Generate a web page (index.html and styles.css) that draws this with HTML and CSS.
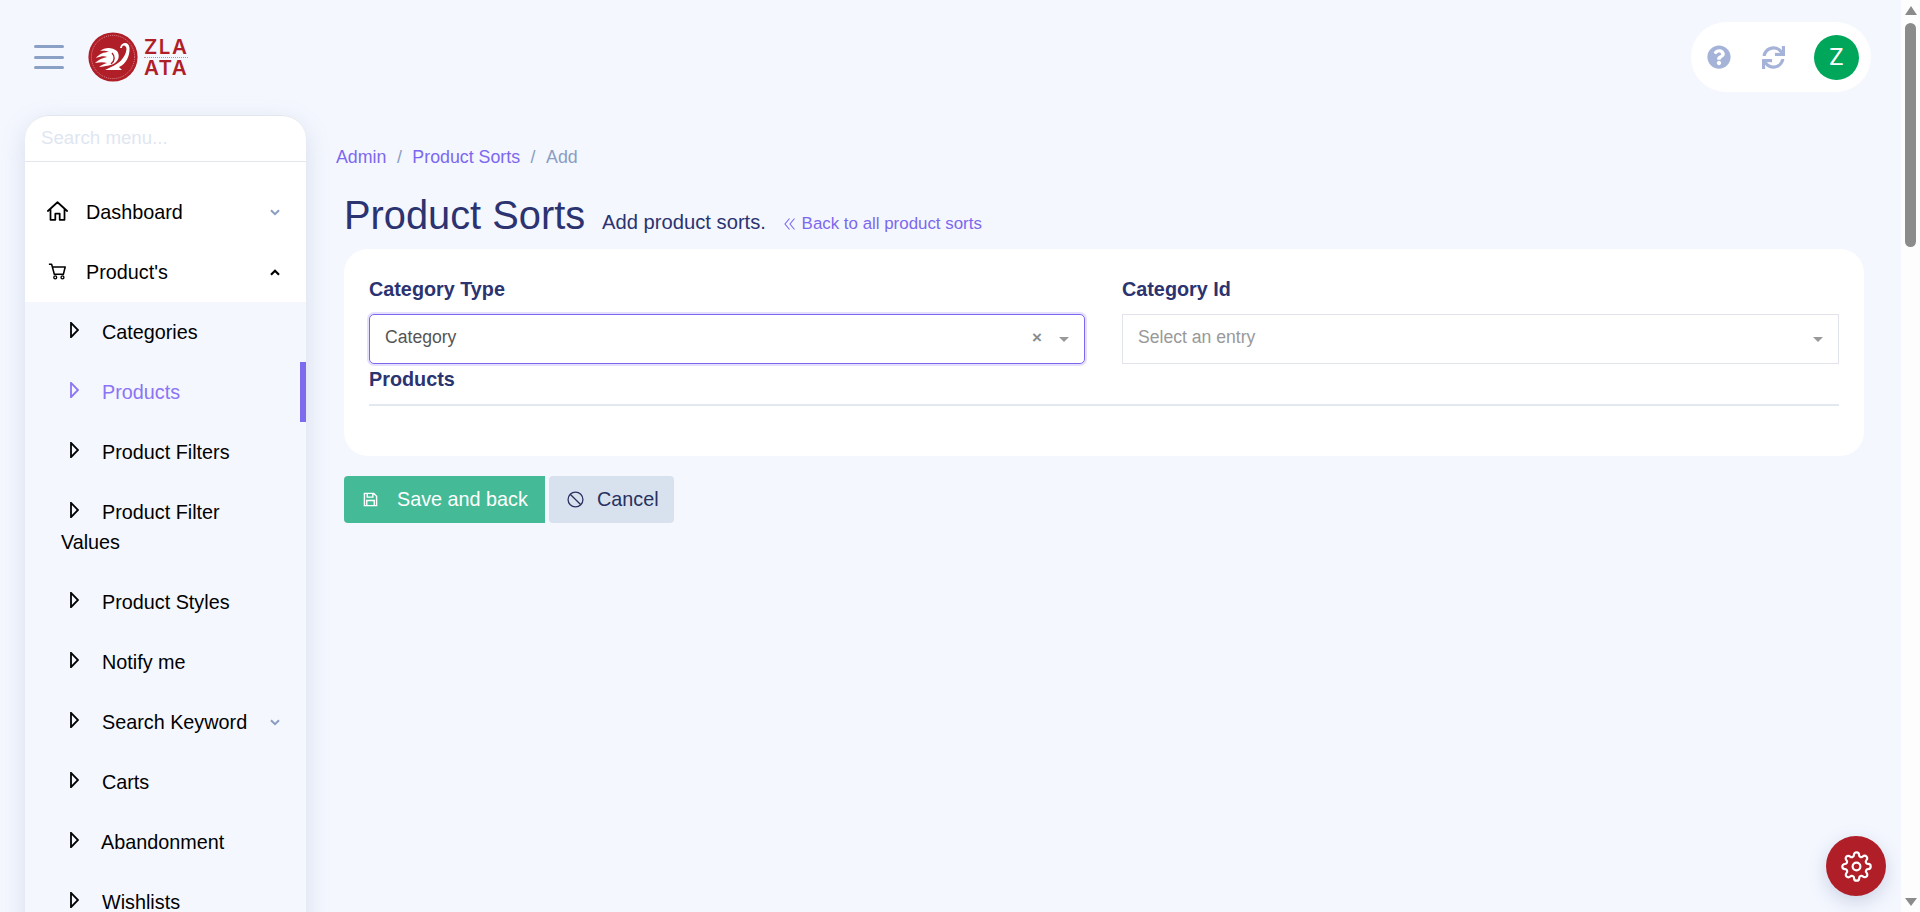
FILE: index.html
```html
<!DOCTYPE html>
<html lang="en">
<head>
<meta charset="utf-8">
<title>Product Sorts</title>
<link rel="stylesheet" href="styles.css">
</head>
<body>
<div class="app">
  <div class="page">
    <header class="topbar">
      <button class="burger" aria-label="Menu"><span></span><span></span><span></span></button>
      <div class="logo">
        <svg class="logo-mark" viewBox="0 0 50 50" width="50" height="50">
          <circle cx="25" cy="25" r="24.6" fill="#b01e28"/>
          <circle cx="25" cy="25" r="21.6" fill="none" stroke="#f3c9cc" stroke-width=".6" stroke-dasharray="1 1"/>
          <path d="M32 16C33 10 41 9 41.500 16C42 24 38 32 31 35L34 38H17L23 35C29 33 38 26 38.500 17C38.500 13 34 12 34 16Z" fill="#fff"/>
          <path d="M29 19C24 15 17 15 12 19C16 18.500 19 19 21 20C16 20 11 22 8 26C13 24 17 24 19 25C14 26 10 28 7 31C12 30 16 30 19 31C16 32 13 33 11 35C17 34 23 34 27 31C31 28 32 23 29 19Z" fill="#fff"/>
          <path d="M24 21C27 24 27 29 23 32" fill="none" stroke="#b01e28" stroke-width="1.400"/>
        </svg>
        <div class="logo-text">
          <span class="logo-word">ZLA</span>
          <span class="logo-word logo-word-low">ATA</span>
        </div>
      </div>
      <div class="actions">
        <svg class="action-icon" viewBox="0 0 512 512" width="24" height="24"><path d="M504 256c0 136.997-111.043 248-248 248S8 392.997 8 256C8 119.083 119.043 8 256 8s248 111.083 248 248zM262.655 90c-54.497 0-89.255 22.957-116.549 63.758-3.536 5.286-2.353 12.415 2.715 16.258l34.699 26.31c5.205 3.947 12.621 3.008 16.665-2.122 17.864-22.658 30.113-35.797 57.303-35.797 20.429 0 45.698 13.148 45.698 32.958 0 14.976-12.363 22.667-32.534 33.976C247.128 238.528 216 254.941 216 296v4c0 6.627 5.373 12 12 12h56c6.627 0 12-5.373 12-12v-1.333c0-28.462 83.186-29.647 83.186-106.667 0-58.002-60.165-102-116.531-102zM256 338c-25.365 0-46 20.635-46 46 0 25.364 20.635 46 46 46s46-20.636 46-46c0-25.365-20.635-46-46-46z"/></svg>
        <svg class="action-icon" viewBox="0 0 512 512" width="23" height="23"><path d="M440.65 12.57l4 82.77A247.16 247.16 0 0 0 255.83 8C134.73 8 33.91 94.92 12.29 209.82A12 12 0 0 0 24.09 224h49.05a12 12 0 0 0 11.67-9.26 175.91 175.91 0 0 1 317-56.94l-101.46-4.86a12 12 0 0 0-12.57 12v47.41a12 12 0 0 0 12 12H500a12 12 0 0 0 12-12V12a12 12 0 0 0-12-12h-47.37a12 12 0 0 0-11.98 12.57zM255.83 432a175.61 175.61 0 0 1-146-77.8l101.8 4.87a12 12 0 0 0 12.57-12v-47.4a12 12 0 0 0-12-12H12a12 12 0 0 0-12 12V500a12 12 0 0 0 12 12h47.35a12 12 0 0 0 12-12.6l-4.15-82.57A247.17 247.17 0 0 0 255.83 504c121.11 0 221.93-86.92 243.55-201.82a12 12 0 0 0-11.8-14.18h-49.05a12 12 0 0 0-11.67 9.26A175.86 175.86 0 0 1 255.83 432z"/></svg>
        <div class="avatar">Z</div>
      </div>
    </header>

    <div class="layout">
      <aside class="sidebar">
        <div class="search"><input class="search-input" type="text" placeholder="Search menu..."></div>
        <nav class="menu">
          <a class="item">
            <svg class="item-icon" viewBox="0 0 24 22" width="21" height="20"><path d="M1 11 12 1l11 10M4 9v12h5.5v-7h5v7H20V9" fill="none" stroke="#000" stroke-width="2" stroke-linejoin="round" stroke-linecap="round"/></svg>
            <span class="item-label">Dashboard</span>
            <svg class="caret" viewBox="0 0 10 7" width="10" height="7"><path d="M1 1.200 5 5.200 9 1.200" fill="none" stroke="#8a9dc0" stroke-width="2"/></svg>
          </a>
          <a class="item">
            <svg class="item-icon item-icon-cart" viewBox="0 0 21 18" width="19" height="17"><path d="M1 1h3l3 11h10l2-8H5" fill="none" stroke="#000" stroke-width="1.700" stroke-linejoin="round"/><circle cx="8" cy="15.500" r="1.600" fill="none" stroke="#000" stroke-width="1.500"/><circle cx="16" cy="15.500" r="1.600" fill="none" stroke="#000" stroke-width="1.500"/></svg>
            <span class="item-label">Product's</span>
            <svg class="caret" viewBox="0 0 10 7" width="10" height="7"><path d="M1 5.800 5 1.800 9 5.800" fill="none" stroke="#000" stroke-width="2.200"/></svg>
          </a>
          <div class="sub">
            <a class="sub-item"><svg class="tri" viewBox="0 0 9 16" width="9" height="16"><path d="M1 .8 8 8 1 15.200Z"/></svg>Categories</a>
            <a class="sub-item active"><svg class="tri" viewBox="0 0 9 16" width="9" height="16"><path d="M1 .8 8 8 1 15.200Z"/></svg>Products</a>
            <a class="sub-item"><svg class="tri" viewBox="0 0 9 16" width="9" height="16"><path d="M1 .8 8 8 1 15.200Z"/></svg>Product Filters</a>
            <a class="sub-item"><svg class="tri" viewBox="0 0 9 16" width="9" height="16"><path d="M1 .8 8 8 1 15.200Z"/></svg>Product Filter Values</a>
            <a class="sub-item"><svg class="tri" viewBox="0 0 9 16" width="9" height="16"><path d="M1 .8 8 8 1 15.200Z"/></svg>Product Styles</a>
            <a class="sub-item"><svg class="tri" viewBox="0 0 9 16" width="9" height="16"><path d="M1 .8 8 8 1 15.200Z"/></svg>Notify me</a>
            <a class="sub-item has-caret"><span><svg class="tri" viewBox="0 0 9 16" width="9" height="16"><path d="M1 .8 8 8 1 15.200Z"/></svg>Search Keyword</span><svg class="caret" viewBox="0 0 10 7" width="10" height="7"><path d="M1 1.200 5 5.200 9 1.200" fill="none" stroke="#8a9dc0" stroke-width="2"/></svg></a>
            <a class="sub-item"><svg class="tri" viewBox="0 0 9 16" width="9" height="16"><path d="M1 .8 8 8 1 15.200Z"/></svg>Carts</a>
            <a class="sub-item tight"><svg class="tri" viewBox="0 0 9 16" width="9" height="16"><path d="M1 .8 8 8 1 15.200Z"/></svg>Abandonment</a>
            <a class="sub-item"><svg class="tri" viewBox="0 0 9 16" width="9" height="16"><path d="M1 .8 8 8 1 15.200Z"/></svg>Wishlists</a>
          </div>
        </nav>
      </aside>

      <main class="main">
        <ol class="crumbs">
          <li class="crumb-link">Admin</li>
          <li class="crumb-sep">/</li>
          <li class="crumb-link">Product Sorts</li>
          <li class="crumb-sep">/</li>
          <li class="crumb-current">Add</li>
        </ol>
        <div class="heading">
          <h1 class="title">Product Sorts</h1>
          <span class="subtitle">Add product sorts.</span>
          <a class="back">
            <svg class="back-icon" viewBox="0 0 12 14" width="12" height="14"><path d="M5.500 1.500 1 7l4.500 5.500M10.500 1.500 6 7l4.500 5.500" fill="none" stroke="#7c68ee" stroke-width="1.100"/></svg>
            Back to all product sorts
          </a>
        </div>
        <section class="card">
          <div class="fields">
            <div class="field">
              <label class="label">Category Type</label>
              <div class="select focused">
                <span class="select-value">Category</span>
                <span class="select-clear">×</span>
                <span class="select-arrow"></span>
              </div>
            </div>
            <div class="field">
              <label class="label">Category Id</label>
              <div class="select">
                <span class="select-placeholder">Select an entry</span>
                <span class="select-arrow"></span>
              </div>
            </div>
          </div>
          <div class="label section-label">Products</div>
          <hr class="rule">
        </section>
        <div class="buttons">
          <button class="btn btn-save">
            <svg viewBox="0 0 16 16" width="15" height="15"><path d="M1.500 1.500h10l3 3v10h-13zM4.500 1.500v4h6v-4M4 14.500v-5.500h8v5.500" fill="none" stroke="#fff" stroke-width="1.500"/></svg>
            Save and back
          </button>
          <button class="btn btn-cancel">
            <svg viewBox="0 0 16 16" width="17" height="17"><circle cx="8" cy="8" r="7" fill="none" stroke="#27305f" stroke-width="1.200"/><path d="M3 3l10 10" stroke="#27305f" stroke-width="1.200"/></svg>
            Cancel
          </button>
        </div>
      </main>
    </div>

    <button class="fab" aria-label="Settings">
      <svg viewBox="0 0 24 24" width="31" height="31" fill="none" stroke="#fff" stroke-width="1.700"><circle cx="12" cy="12" r="3"/><path d="M19.400 15a1.650 1.650 0 0 0 .33 1.820l.06.06a2 2 0 0 1 0 2.830 2 2 0 0 1-2.830 0l-.06-.06a1.650 1.650 0 0 0-1.820-.33 1.650 1.650 0 0 0-1 1.510V21a2 2 0 0 1-2 2 2 2 0 0 1-2-2v-.09A1.650 1.650 0 0 0 9 19.400a1.650 1.650 0 0 0-1.820.33l-.06.06a2 2 0 0 1-2.830 0 2 2 0 0 1 0-2.830l.06-.06a1.650 1.650 0 0 0 .33-1.820 1.650 1.650 0 0 0-1.510-1H3a2 2 0 0 1-2-2 2 2 0 0 1 2-2h.09A1.650 1.650 0 0 0 4.600 9a1.650 1.650 0 0 0-.33-1.820l-.06-.06a2 2 0 0 1 0-2.830 2 2 0 0 1 2.830 0l.06.06a1.650 1.650 0 0 0 1.820.33H9a1.650 1.650 0 0 0 1-1.510V3a2 2 0 0 1 2-2 2 2 0 0 1 2 2v.09a1.650 1.650 0 0 0 1 1.510 1.650 1.650 0 0 0 1.820-.33l.06-.06a2 2 0 0 1 2.830 0 2 2 0 0 1 0 2.830l-.06.06a1.650 1.650 0 0 0-.33 1.820V9a1.650 1.650 0 0 0 1.510 1H21a2 2 0 0 1 2 2 2 2 0 0 1-2 2h-.09a1.650 1.650 0 0 0-1.510 1z"/></svg>
    </button>
  </div>

  <div class="scrollbar">
    <span class="sb-up"></span>
    <span class="sb-thumb"></span>
    <span class="sb-down"></span>
  </div>
</div>
</body>
</html>
```
FILE: styles.css
```css
* { box-sizing: border-box; }
html, body { margin: 0; height: 100%; overflow: hidden; }
body { font-family: "Liberation Sans", Arial, sans-serif; color: #000; background: #f4f7fe; }

.app { display: flex; width: 1920px; height: 912px; }
.page { position: relative; flex: 1; min-width: 0; height: 912px; overflow: hidden; background: #f4f7fe; }

/* Scrollbar */
.scrollbar { width: 19px; height: 912px; background: #fdfdfd; display: flex; flex-direction: column; align-items: center; }
.sb-up { margin-top: 6px; width: 0; height: 0; border-left: 6.5px solid transparent; border-right: 6.5px solid transparent; border-bottom: 9px solid #8b8b8b; }
.sb-thumb { margin-top: 8px; width: 11px; height: 224px; border-radius: 6px; background: #8b8b8b; }
.sb-down { margin-top: auto; margin-bottom: 6px; width: 0; height: 0; border-left: 6.5px solid transparent; border-right: 6.5px solid transparent; border-top: 8px solid #8b8b8b; }

/* Top bar */
.topbar { height: 115px; display: flex; align-items: flex-start; padding: 22px 30px 0 34px; }
.burger { width: 30px; height: 24px; margin-top: 23px; padding: 0; border: 0; background: none; display: flex; flex-direction: column; justify-content: space-between; }
.burger span { display: block; height: 3px; border-radius: 2px; background: #8aa0c4; }
.logo { display: flex; margin-left: 24px; margin-top: 10px; }
.logo-mark { display: block; }
.logo-text { display: flex; flex-direction: column; margin-left: 6px; margin-top: 5px; color: #b01e28; font-family: Inter, "Liberation Sans", sans-serif; font-size: 20.5px; line-height: 20px; font-weight: 600; letter-spacing: 1.5px; }
.logo-word { display: block; }
.logo-word-low { border-top: 1px dotted #d9878d; }
.actions { margin-left: auto; width: 180px; height: 70px; border-radius: 35px; background: #fff; display: flex; align-items: center; padding: 0 12px 0 16px; }
.action-icon { fill: #a6b3d8; flex: none; margin-right: 31px; display: block; }
.action-icon + .action-icon { margin-right: 0; }
.avatar { flex: none; width: 45px; height: 45px; margin-left: auto; border-radius: 50%; background: #00a65a; color: #fff; font-size: 24px; display: flex; align-items: center; justify-content: center; font-family: Roboto, "Liberation Sans", sans-serif; }

/* Sidebar */
.layout { display: flex; align-items: flex-start; }
.sidebar { width: 281px; margin-left: 25px; flex: none; background: #fff; border-radius: 24px 24px 0 0; box-shadow: 0 8px 24px rgba(112, 130, 175, .22); font-size: 19.8px; }
.search { height: 47px; border-bottom: 1px solid #e3e6ec; border-top: 1px solid #e3e6ec; border-radius: 24px 24px 0 0; padding: 0 16px 2px; display: flex; align-items: center; }
.search-input { width: 100%; border: 0; outline: 0; padding: 0; background: none; font: 18.7px "Liberation Sans", Arial, sans-serif; }
.search-input::placeholder { color: #dfe6f2; opacity: 1; }
.menu { padding-top: 20px; }
.item { height: 60px; display: flex; align-items: center; padding: 0 26px 0 22px; color: #000; }
.item-icon { flex: none; display: block; margin-right: 18px; margin-top: -2px; }
.item-icon-cart { margin-left: 1px; margin-right: 19px; }
.item-label { flex: 1; }
.caret { flex: none; display: block; }
.sub { background: #f4f7fe; }
.sub-item { position: relative; display: block; padding: 15px 50px 15px 36px; line-height: 30px; color: #000; }
.sub-item.has-caret { display: flex; justify-content: space-between; align-items: center; padding-right: 26px; }
.tri { display: inline-block; margin: 0 23px 0 9px; vertical-align: 1px; fill: none; stroke: #000; stroke-width: 1.8; }
.tight .tri { margin-right: 22px; }
.sub-item.active { color: #8b74f5; }
.sub-item.active .tri { stroke: #8b74f5; }
.sub-item.active::after { content: ""; position: absolute; right: 0; top: 0; bottom: 0; width: 6px; background: #7f6bee; }

/* Main */
.main { flex: 1; min-width: 0; padding: 30px 37px 0 30px; }
.crumbs { list-style: none; margin: 0; padding: 0; height: 24px; display: flex; align-items: center; font-size: 17.8px; line-height: 24px; }
.crumb-link { color: #7c68ee; }
.crumb-sep { color: #8a9dc0; margin: 0 10.5px; }
.crumb-current { color: #8a9dc0; }
.heading { display: flex; align-items: baseline; margin-top: 22px; padding-left: 8px; height: 58px; line-height: 48px; }
.title { margin: 0; font-size: 39.8px; font-weight: 400; color: #2b3370; line-height: 48px; }
.subtitle { margin-left: 17px; font-size: 20.2px; color: #2b3370; }
.back { margin-left: 18px; font-size: 16.9px; color: #7c68ee; }
.back-icon { margin-right: 1px; vertical-align: -2px; }
.card { margin-left: 8px; height: 207px; border-radius: 24px; background: #fff; padding: 28px 25px 0; }
.fields { display: grid; grid-template-columns: 716px 717px; column-gap: 37px; }
.label { display: block; font-size: 19.8px; font-weight: 700; color: #2b3370; line-height: 24px; }
.select { margin-top: 13px; height: 50px; display: flex; align-items: center; padding: 0 15px 3px; border: 1px solid #e2e4ec; font-size: 17.6px; background: #fff; }
.select.focused { border: 1.5px solid #7c68ee; border-radius: 5px; box-shadow: 0 0 0 2px #e5e1fc; }
.select-value { flex: 1; color: #555; }
.select-placeholder { flex: 1; color: #999; }
.select-clear { color: #8b8b8b; font-weight: 700; font-size: 17px; margin-right: 17px; line-height: 1; }
.select-arrow { width: 0; height: 0; border-left: 5px solid transparent; border-right: 5px solid transparent; border-top: 5px solid #999; margin-top: 4px; }
.section-label { margin-top: 3px; line-height: 24px; }
.rule { margin: 13px 0 0; border: 0; height: 2px; background: #e2e8f0; }
.buttons { display: flex; gap: 4px; margin: 20px 0 0 8px; }
.btn { height: 47px; border: 0; display: flex; align-items: center; font: 19.8px "Liberation Sans", Arial, sans-serif; padding: 0; }
.btn-save { width: 201px; padding-left: 19px; gap: 19px; background: #44bb96; color: #fff; border-radius: 4px 0 0 4px; }
.btn-cancel { width: 125px; padding-left: 18px; gap: 13px; background: #d8e2ee; color: #27305f; border-radius: 4px; }

/* Floating button */
.fab { position: absolute; left: 1826px; top: 836px; width: 60px; height: 60px; padding: 0; border: 0; border-radius: 50%; background: #b01e28; display: flex; align-items: center; justify-content: center; box-shadow: 0 6px 18px rgba(112, 130, 175, .3); }
```
